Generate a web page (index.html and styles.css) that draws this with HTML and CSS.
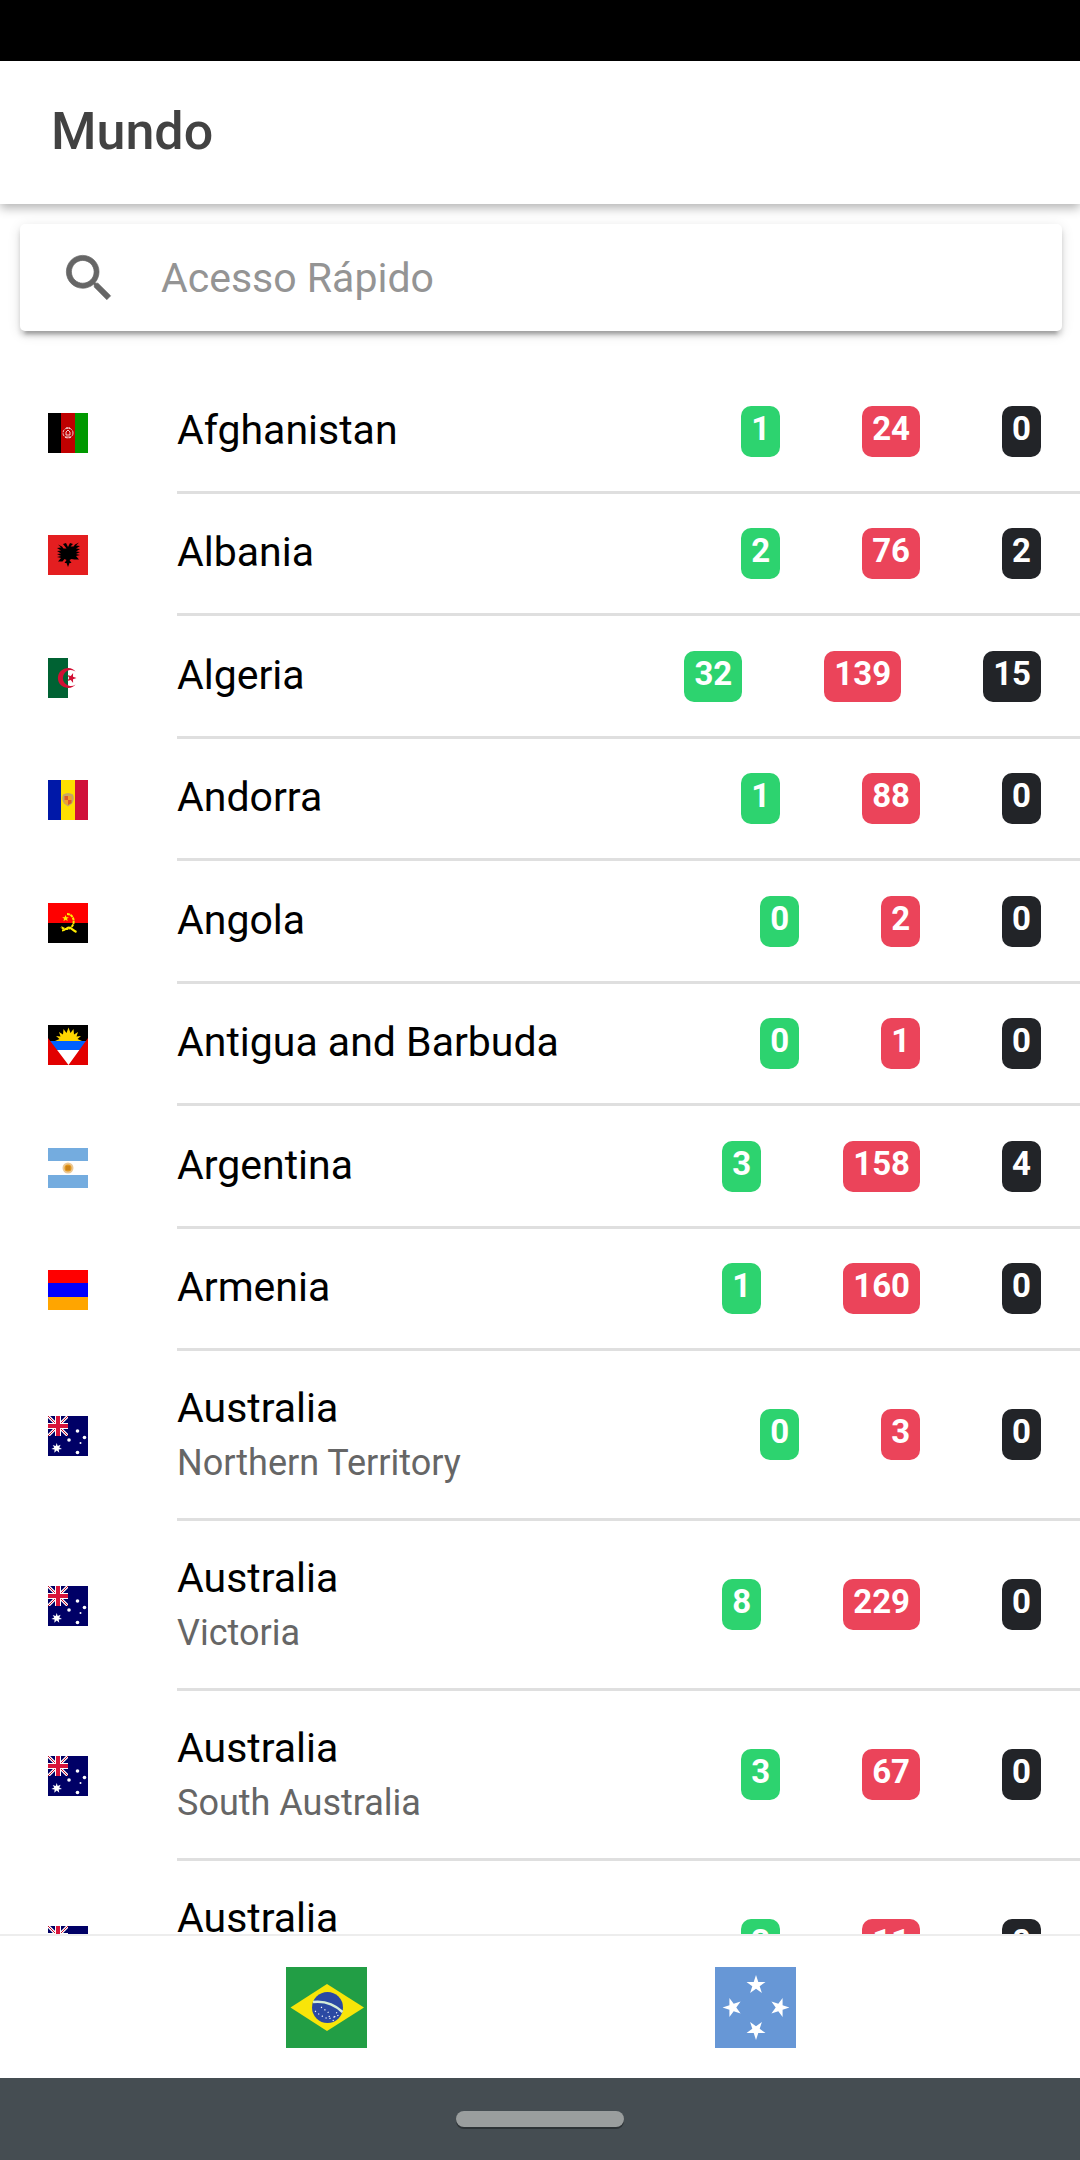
FILE: index.html
```html
<!DOCTYPE html>
<html lang="pt-BR">
<head>
<meta charset="utf-8">
<meta name="viewport" content="width=device-width, initial-scale=1">
<title>Mundo</title>
<link rel="stylesheet" href="styles.css">
</head>
<body>
<svg class="sprite" aria-hidden="true">
  <symbol id="flag-au" viewBox="0 0 40 40">
    <path fill="#006" d="M0 0h40v40H0z"/>
    <path stroke="#fff" stroke-width="3" d="M0 0l20 20M20 0L0 20"/>
    <path stroke="#c8102e" stroke-width="1" d="M0 0l20 20M20 0L0 20"/>
    <path stroke="#fff" stroke-width="6" d="M10 0v20M0 10h20"/>
    <path stroke="#d8143a" stroke-width="4" d="M10 0v20M0 10h20"/>
    <path fill="#006" d="M20 0h4v24H0v-4h20z"/>
    <path fill="#fff" d="M8.700 27l1 3 2.900-1.300-1.300 2.900 2.700 1.400-3.300.5.600 3.300-2.600-2.200-2.400 2.200.300-3.200-3.200-.5 2.800-1.500-1.500-2.600 3 1z"/>
    <g fill="#fff"><circle cx="29.500" cy="15" r="1.800"/><circle cx="21" cy="24" r="1.800"/><circle cx="36.500" cy="21.500" r="1.800"/><circle cx="29.500" cy="36.500" r="1.800"/><circle cx="32.500" cy="27" r="1"/></g>
  </symbol>
  <symbol id="star" viewBox="-10 -10 20 20">
    <path d="M0-10l2.300 6.900 7.200 0-5.800 4.300 2.200 6.900L0 3.800l-5.900 4.300 2.200-6.900-5.800-4.300h7.200z"/>
  </symbol>
</svg>

<div class="status-bar"></div>
<header class="toolbar"><h1>Mundo</h1></header>

<main class="content">
  <label class="search">
    <svg class="search-icon" viewBox="0 0 512 512" aria-hidden="true"><path d="M337.509 305.372h-17.501l-6.571-5.486c20.791-25.232 33.922-57.054 33.922-93.257C347.358 127.632 283.896 64 205.135 64 127.452 64 64 127.632 64 206.629s63.452 142.628 142.225 142.628c35.011 0 67.831-13.167 92.991-34.008l6.561 5.487v17.551L415.180 448 448 415.086 337.509 305.372zm-131.284 0c-54.702 0-98.463-43.887-98.463-98.743 0-54.858 43.761-98.742 98.463-98.742 54.700 0 98.462 43.884 98.462 98.742 0 54.856-43.762 98.743-98.462 98.743z"/></svg>
    <input type="search" placeholder="Acesso Rápido" aria-label="Acesso Rápido">
  </label>

  <ul class="list">
    <li class="row">
      <svg class="flag" viewBox="0 0 40 40" aria-hidden="true"><path d="M0 0h13v40H0z"/><path fill="#bf0000" d="M13 0h14v40H13z"/><path fill="#090" d="M27 0h13v40H27z"/><g fill="none" stroke="#fff" stroke-opacity=".8"><circle cx="20" cy="20" r="5" stroke-dasharray="3 1"/><path d="M18 22v-3l2-2 2 2v3zM17 24h6M18 15h4"/></g></svg>
      <div class="body"><h2>Afghanistan</h2><div class="badges"><span class="badge green">1</span><span class="badge red">24</span><span class="badge dark">0</span></div></div>
    </li>
    <li class="row">
      <svg class="flag" viewBox="0 0 40 40" aria-hidden="true"><path fill="#e41e20" d="M0 0h40v40H0z"/><path d="M20 32l-1.500-4h-2l2-3-2-1-2 2.500H10l3-3.500-4-1 4-1-4-2 4-.5-4-2.500 4-.5-4-2.500 4-.5-3-3 4 2 1.500 2h3L15 9l3-1 1.500 3 .5 1 .5-1L22 8l3 1-2.500 2.500h3l1.500-2 4-2-3 3 4 .5-4 2.500 4 .5-4 2.500 4 .5-4 2 4 1-4 1 3 3.500h-4.500L23.500 24l-2 1 2 3h-2z"/></svg>
      <div class="body"><h2>Albania</h2><div class="badges"><span class="badge green">2</span><span class="badge red">76</span><span class="badge dark">2</span></div></div>
    </li>
    <li class="row">
      <svg class="flag" viewBox="0 0 40 40" aria-hidden="true"><path fill="#fff" d="M0 0h40v40H0z"/><path fill="#006233" d="M0 0h20v40H0z"/><path fill="#d21034" d="M27.500 13.500a10 10 0 1 0 0 13 8 8 0 1 1 0-13zM28.500 20l-3.500-1.200.1-3.700-2.300 2.900-3.500-1 2 3-2 3 3.500-1 2.300 2.900-.1-3.700z"/></svg>
      <div class="body"><h2>Algeria</h2><div class="badges"><span class="badge green">32</span><span class="badge red">139</span><span class="badge dark">15</span></div></div>
    </li>
    <li class="row">
      <svg class="flag" viewBox="0 0 40 40" aria-hidden="true"><path fill="#0018a8" d="M0 0h13v40H0z"/><path fill="#fedf00" d="M13 0h14v40H13z"/><path fill="#d0103a" d="M27 0h13v40H27z"/><path fill="#c7a763" d="M15 14.500q5-3 10 0 2 5-1 9l-4 3-4-3q-3-4-1-9z"/><path fill="#dc5a28" d="M16.500 16H20v4h-3.500zM20 20h3.500v3L20 25z"/><path fill="#f2a02c" d="M20 16h3.500v4H20zM16.500 20H20v5l-3.500-2z"/></svg>
      <div class="body"><h2>Andorra</h2><div class="badges"><span class="badge green">1</span><span class="badge red">88</span><span class="badge dark">0</span></div></div>
    </li>
    <li class="row">
      <svg class="flag" viewBox="0 0 40 40" aria-hidden="true"><path d="M0 0h40v40H0z"/><path fill="red" d="M0 0h40v20H0z"/><g fill="none" stroke="#ffec00" stroke-width="2"><path d="M19 11c8 0 9 12 2 14.500-4 1.500-6-.5-8-1.500" stroke-dasharray="3 .5"/><path d="M14 27.500c3 0 5-3 7-3s4 3 7.500 4.500"/></g><path fill="#ffec00" d="M17.500 12l1 2.200 2.400.1-1.900 1.500.7 2.300-2.200-1.300-2 1.400.6-2.400-1.900-1.500 2.400-.1z"/></svg>
      <div class="body"><h2>Angola</h2><div class="badges"><span class="badge green">0</span><span class="badge red">2</span><span class="badge dark">0</span></div></div>
    </li>
    <li class="row">
      <svg class="flag" viewBox="0 0 40 40" aria-hidden="true"><path d="M0 0h40v40H0z"/><path fill="#ffd600" d="M7 16l4.500-2L8 11l4.500.5L11 7l4 2.500L15.500 4l3 4L20.500 2.500 22.500 8l3-4 .5 5.500L30 7l-1.500 4.500L33 11l-3.500 3 4.500 2z"/><path fill="#0061ff" d="M0 16h40v9H0z"/><path fill="#fff" d="M0 25h40v15H0z"/><path fill="#e20000" d="M0 13l20.500 27H0zM40 13v27H20.500z"/></svg>
      <div class="body"><h2>Antigua and Barbuda</h2><div class="badges"><span class="badge green">0</span><span class="badge red">1</span><span class="badge dark">0</span></div></div>
    </li>
    <li class="row">
      <svg class="flag" viewBox="0 0 40 40" aria-hidden="true"><path fill="#74acdf" d="M0 0h40v40H0z"/><path fill="#fff" d="M0 13h40v14H0z"/><circle cx="20" cy="20" r="4.500" fill="#e0961c" stroke="#ecc894" stroke-width="2"/><path fill="none" stroke="#b87018" d="M18 19h4M18 21h4"/></svg>
      <div class="body"><h2>Argentina</h2><div class="badges"><span class="badge green">3</span><span class="badge red">158</span><span class="badge dark">4</span></div></div>
    </li>
    <li class="row">
      <svg class="flag" viewBox="0 0 40 40" aria-hidden="true"><path fill="red" d="M0 0h40v13H0z"/><path fill="#00f" d="M0 13h40v14H0z"/><path fill="#ffa500" d="M0 27h40v13H0z"/></svg>
      <div class="body"><h2>Armenia</h2><div class="badges"><span class="badge green">1</span><span class="badge red">160</span><span class="badge dark">0</span></div></div>
    </li>
    <li class="row tall">
      <svg class="flag" aria-hidden="true"><use href="#flag-au"/></svg>
      <div class="body"><div class="label"><h2>Australia</h2><p>Northern Territory</p></div><div class="badges"><span class="badge green">0</span><span class="badge red">3</span><span class="badge dark">0</span></div></div>
    </li>
    <li class="row tall">
      <svg class="flag" aria-hidden="true"><use href="#flag-au"/></svg>
      <div class="body"><div class="label"><h2>Australia</h2><p>Victoria</p></div><div class="badges"><span class="badge green">8</span><span class="badge red">229</span><span class="badge dark">0</span></div></div>
    </li>
    <li class="row tall">
      <svg class="flag" aria-hidden="true"><use href="#flag-au"/></svg>
      <div class="body"><div class="label"><h2>Australia</h2><p>South Australia</p></div><div class="badges"><span class="badge green">3</span><span class="badge red">67</span><span class="badge dark">0</span></div></div>
    </li>
    <li class="row tall">
      <svg class="flag" aria-hidden="true"><use href="#flag-au"/></svg>
      <div class="body"><div class="label"><h2>Australia</h2><p>&nbsp;</p></div><div class="badges"><span class="badge green">3</span><span class="badge red">11</span><span class="badge dark">0</span></div></div>
    </li>
  </ul>
</main>

<nav class="tab-bar">
  <button class="tab" type="button" aria-label="Brasil">
    <svg class="tab-flag" viewBox="0 0 81 81" aria-hidden="true"><path fill="#229e45" d="M0 0h81v81H0z"/><path fill="#f8e509" d="M4.500 40.500L41 17l37 23.500L41 64z"/><circle cx="41.500" cy="40.500" r="15.500" fill="#2b49a3"/><path fill="none" stroke="#d5edd8" stroke-width="2.600" d="M27 35q17-2 29.500 10"/><path fill="none" stroke="#fff" stroke-width="1.200" stroke-dasharray="1.200 3" d="M29 44l5 4 8 4 9-3 4-2M35 40l7 5 2 7M47 54l2-5 2-4"/></svg>
  </button>
  <button class="tab" type="button" aria-label="Mundo">
    <svg class="tab-flag" viewBox="0 0 81 81" aria-hidden="true"><path fill="#6797d6" d="M0 0h81v81H0z"/><g fill="#fff"><use href="#star" x="31" y="8" width="20" height="20"/><use href="#star" x="31" y="8" width="20" height="20" transform="rotate(180 41 40.500)"/><use href="#star" x="31" y="8" width="20" height="20" transform="translate(0 -1) rotate(-90 41 41.500)"/><use href="#star" x="31" y="8" width="20" height="20" transform="translate(0 -1) rotate(90 41 41.500)"/></g></svg>
  </button>
</nav>
<div class="system-nav"><div class="pill"></div></div>
</body>
</html>
```

FILE: styles.css
```css
* {
  box-sizing: border-box;
}

body {
  margin: 0;
  height: 100vh;
  display: flex;
  flex-direction: column;
  overflow: hidden;
  background: #fff;
  color: #000;
  font-family: Roboto, sans-serif;
}

h1,
h2,
p,
ul {
  margin: 0;
  padding: 0;
  font-weight: 400;
}

.sprite {
  display: none;
}

.status-bar {
  flex: none;
  height: 61px;
  background: #000;
}

.toolbar {
  flex: none;
  display: flex;
  align-items: center;
  height: 143px;
  padding: 0 51px 2px;
  box-shadow: 0 4px 10px rgba(0, 0, 0, 0.3);
}

.toolbar h1 {
  color: #424242;
  font-size: 52px;
  line-height: 62px;
  font-weight: 500;
}

.content {
  flex: 1;
  min-height: 0;
  overflow: hidden;
  padding-top: 20px;
}

.search {
  display: flex;
  align-items: center;
  gap: 43px;
  height: 107px;
  margin: 0 18px 40px 20px;
  padding: 0 39px;
  border-radius: 5px;
  background: #fff;
  box-shadow: 0 5px 5px rgba(0, 0, 0, 0.14), 0 8px 3px -5px rgba(0, 0, 0, 0.2), 0 3px 13px rgba(0, 0, 0, 0.12);
}

.search-icon {
  flex: none;
  width: 59px;
  height: 59px;
  fill: #666;
  stroke: #666;
  stroke-width: 6;
}

.search input {
  flex: 1;
  min-width: 0;
  height: 60px;
  padding: 0;
  border: 0;
  outline: 0;
  background: none;
  color: #424242;
  font: 400 41px/60px Roboto, sans-serif;
}

.search input::placeholder {
  color: #949494;
  opacity: 1;
}

.list {
  list-style: none;
}

.row {
  display: flex;
  align-items: center;
  gap: 89px;
  height: 122px;
  padding-left: 48px;
}

.row:nth-child(odd) {
  height: 123px;
}

.row.tall {
  height: 170px;
}

.flag {
  flex: none;
  width: 40px;
  height: 40px;
}

.body {
  flex: 1;
  align-self: stretch;
  display: flex;
  align-items: center;
  justify-content: space-between;
  padding-right: 39px;
  border-bottom: 3px solid #dfdfdf;
}

h2 {
  padding-bottom: 2px;
  font-size: 41px;
  line-height: 49px;
}

.label {
  display: grid;
  gap: 6px;
}

.label p {
  color: #666;
  font-size: 36px;
  line-height: 44px;
}

.badges {
  display: flex;
  gap: 82px;
}

.badge {
  padding: 6px 10px 11px;
  border-radius: 10px;
  color: #fff;
  font-size: 33px;
  line-height: 34px;
  font-weight: 700;
}

.green {
  background: #2dd36f;
}

.red {
  background: #eb445a;
}

.dark {
  background: #222428;
}

.tab-bar {
  flex: none;
  display: flex;
  justify-content: center;
  height: 144px;
  padding-left: 2px;
  border-top: 2px solid #ededed;
  background: #fff;
}

.tab {
  flex: 1;
  max-width: 429px;
  display: flex;
  align-items: center;
  justify-content: center;
  padding: 0;
  border: 0;
  background: none;
}

.tab-flag {
  width: 81px;
  height: 81px;
}

.system-nav {
  flex: none;
  display: flex;
  align-items: center;
  justify-content: center;
  height: 82px;
  background: #454d52;
}

.pill {
  width: 168px;
  height: 16px;
  border-radius: 8px;
  background: #9a9e9e;
  box-shadow: 0 2px 0 #2d3336;
}
```
